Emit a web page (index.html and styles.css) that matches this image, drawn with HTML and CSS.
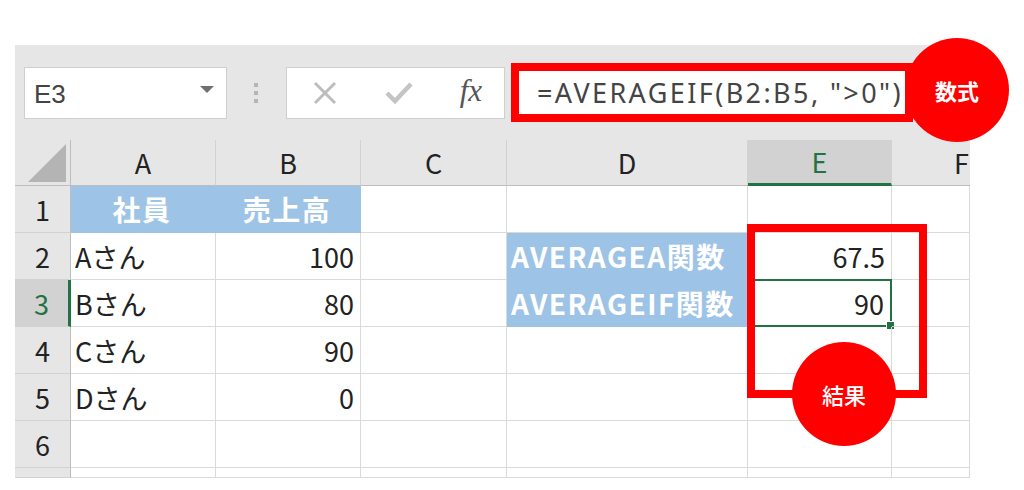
FILE: index.html
```html
<!DOCTYPE html>
<html lang="ja">
  <head>
    <meta charset="UTF-8" />
    <title>AVERAGEIF</title>
    <link rel="stylesheet" href="styles.css">
  </head>
  <body>
    <div class="excel">
      <div class="toolbar">
        <div class="name-box">
          <span>E3</span>
          <span class="caret"></span>
        </div>
        <div class="dots"><i></i><i></i><i></i></div>
        <div class="fx-buttons">
          <svg width="26" height="26" viewBox="0 0 26 26"><path d="M3 3 L23 23 M23 3 L3 23" stroke="#bdbdbd" stroke-width="3"/></svg>
          <svg width="28" height="24" viewBox="0 0 28 24"><path d="M2 12 L10 20 L26 3" stroke="#c4c4c4" stroke-width="4.5" fill="none"/></svg>
          <span class="fx">fx</span>
        </div>
        <div class="formula">=AVERAGEIF(B2:B5, "&gt;0")</div>
      </div>

      <div class="grid">
        <div class="corner"><span class="tri"></span></div>
        <div class="col-head">A</div>
        <div class="col-head">B</div>
        <div class="col-head">C</div>
        <div class="col-head">D</div>
        <div class="col-head active">E</div>
        <div class="col-head last">F</div>

        <div class="row-head">1</div>
        <div class="cell blue center">社員</div>
        <div class="cell blue center">売上高</div>
        <div class="cell"></div>
        <div class="cell"></div>
        <div class="cell"></div>
        <div class="cell"></div>

        <div class="row-head">2</div>
        <div class="cell">Aさん</div>
        <div class="cell num">100</div>
        <div class="cell"></div>
        <div class="cell blue">AVERAGEA関数</div>
        <div class="cell num">67.5</div>
        <div class="cell"></div>

        <div class="row-head active">3</div>
        <div class="cell">Bさん</div>
        <div class="cell num">80</div>
        <div class="cell"></div>
        <div class="cell blue">AVERAGEIF関数</div>
        <div class="cell num selected">90<span class="handle"></span></div>
        <div class="cell"></div>

        <div class="row-head">4</div>
        <div class="cell">Cさん</div>
        <div class="cell num">90</div>
        <div class="cell"></div>
        <div class="cell"></div>
        <div class="cell"></div>
        <div class="cell"></div>

        <div class="row-head">5</div>
        <div class="cell">Dさん</div>
        <div class="cell num">0</div>
        <div class="cell"></div>
        <div class="cell"></div>
        <div class="cell"></div>
        <div class="cell"></div>

        <div class="row-head">6</div>
        <div class="cell"></div>
        <div class="cell"></div>
        <div class="cell"></div>
        <div class="cell"></div>
        <div class="cell"></div>
        <div class="cell"></div>

        <div class="row-head"></div>
        <div class="cell"></div>
        <div class="cell"></div>
        <div class="cell"></div>
        <div class="cell"></div>
        <div class="cell"></div>
        <div class="cell"></div>
      </div>

      <div class="result-box"></div>
      <div class="badge badge-formula">数式</div>
      <div class="badge badge-result">結果</div>
    </div>
  </body>
</html>
```

FILE: styles.css
```css
body {
  margin: 0;
  background: #fff;
  font-family: "Noto Sans CJK JP", "Noto Sans", sans-serif;
  color: #222;
}
.excel {
  position: relative;
  width: 955px;
  margin: 45px 0 0 15px;
  background: #e6e6e6;
}
.toolbar {
  display: flex;
  align-items: center;
  height: 95px;
  padding-left: 9px;
}
.name-box {
  display: flex;
  align-items: center;
  justify-content: space-between;
  box-sizing: border-box;
  width: 203px;
  height: 52px;
  padding: 4px 12px 0 9px;
  background: #fff;
  border: 1px solid #cfcfcf;
  font-family: "Liberation Sans", sans-serif;
  font-size: 26px;
  color: #444;
}
.caret {
  width: 0;
  height: 0;
  border-left: 7px solid transparent;
  border-right: 7px solid transparent;
  border-top: 7px solid #707070;
  margin-bottom: 10px;
}
.dots {
  display: flex;
  flex-direction: column;
  gap: 4px;
  margin: 0 28px 0 27px;
}
.dots i {
  width: 4px;
  height: 4px;
  background: #b5b5b5;
}
.fx-buttons {
  display: flex;
  align-items: center;
  justify-content: space-between;
  box-sizing: border-box;
  width: 219px;
  height: 52px;
  padding: 0 22px 0 25px;
  background: #fff;
  border: 1px solid #cfcfcf;
}
.fx {
  font-family: "Liberation Serif", serif;
  font-style: italic;
  font-size: 31px;
  color: #555;
  margin-bottom: 4px;
}
.formula {
  box-sizing: border-box;
  width: 402px;
  height: 59px;
  margin-left: 6px;
  padding-left: 18px;
  background: #fff;
  border: 8px solid #ff0000;
  font-family: "Noto Sans", sans-serif;
  font-size: 27px;
  letter-spacing: 2.4px;
  line-height: 43px;
  color: #444;
  white-space: nowrap;
}
.grid {
  display: grid;
  grid-template-columns: 56px 145px 145px 146px 241px 144px 78px;
  grid-template-rows: 46px repeat(6, 47px) 10px;
  background: #fff;
}
.corner {
  position: relative;
  background: #e6e6e6;
  border-right: 1px solid #bdbdbd;
  border-bottom: 1px solid #bdbdbd;
}
.tri {
  position: absolute;
  left: 13px;
  top: 4px;
  width: 0;
  height: 0;
  border-left: 38px solid transparent;
  border-bottom: 38px solid #b4b4b4;
}
.col-head {
  display: flex;
  align-items: center;
  justify-content: center;
  background: #e6e6e6;
  border-right: 1px solid #d2d2d2;
  border-bottom: 1px solid #bdbdbd;
  font-size: 27px;
}
.col-head.active {
  background: #d2d2d2;
  color: #217346;
  border-bottom: 3px solid #217346;
}
.col-head.last {
  border-right: none;
  justify-content: flex-start;
  padding-left: 62px;
  overflow: hidden;
}
.row-head {
  display: flex;
  align-items: center;
  justify-content: center;
  background: #e6e6e6;
  border-right: 1px solid #bdbdbd;
  border-bottom: 1px solid #d2d2d2;
  font-size: 27px;
}
.row-head.active {
  background: #d2d2d2;
  color: #217346;
  border-right: 3px solid #217346;
}
.cell {
  position: relative;
  display: flex;
  align-items: center;
  padding: 0 6px 0 4px;
  border-right: 1px solid #dadada;
  border-bottom: 1px solid #dadada;
  font-size: 27px;
  white-space: nowrap;
}
.cell.num {
  justify-content: flex-end;
}
.cell.center {
  justify-content: center;
}
.cell.blue {
  background: #9dc3e6;
  color: #fff;
  font-weight: 700;
  font-size: 28px;
  letter-spacing: 1.5px;
  border-color: #9dc3e6;
}
.cell.selected {
  border: 2px solid #217346;
  margin: -1px 0 0 -1px;
}
.handle {
  position: absolute;
  right: -5px;
  bottom: -5px;
  width: 7px;
  height: 7px;
  background: #217346;
  border: 1px solid #fff;
}
.result-box {
  position: absolute;
  left: 732px;
  top: 179px;
  width: 180px;
  height: 174px;
  box-sizing: border-box;
  border: 8px solid #ff0000;
}
.badge {
  position: absolute;
  display: flex;
  align-items: center;
  justify-content: center;
  width: 104px;
  height: 104px;
  border-radius: 50%;
  background: #ff0000;
  color: #fff;
  font-size: 22px;
  font-weight: 700;
}
.badge-formula {
  left: 890px;
  top: -7px;
}
.badge-result {
  left: 777px;
  top: 297px;
  font-weight: 500;
}
```
